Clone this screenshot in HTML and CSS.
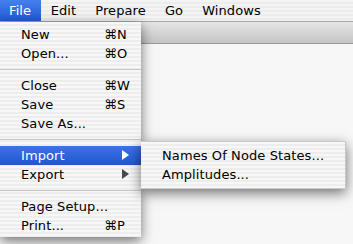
FILE: index.html
```html
<!DOCTYPE html>
<html>
<head>
<meta charset="utf-8">
<link rel="stylesheet" href="styles.css">
</head>
<body>
<div class="screen">
  <div class="menubar">
    <span class="mb-item active">File</span>
    <span class="mb-item">Edit</span>
    <span class="mb-item">Prepare</span>
    <span class="mb-item">Go</span>
    <span class="mb-item">Windows</span>
  </div>
  <div class="window">
    <div class="titlebar"></div>
    <div class="content"></div>
  </div>

  <div class="menu file-menu">
    <div class="row"><span class="label">New</span><span class="key">⌘N</span></div>
    <div class="row"><span class="label">Open...</span><span class="key">⌘O</span></div>
    <div class="sep"></div>
    <div class="row"><span class="label">Close</span><span class="key">⌘W</span></div>
    <div class="row"><span class="label">Save</span><span class="key">⌘S</span></div>
    <div class="row"><span class="label">Save As...</span><span class="key"></span></div>
    <div class="sep"></div>
    <div class="row hl"><span class="label">Import</span><span class="key"><span class="arrow"></span></span></div>
    <div class="row"><span class="label">Export</span><span class="key"><span class="arrow"></span></span></div>
    <div class="sep"></div>
    <div class="row"><span class="label wide">Page Setup...</span></div>
    <div class="row"><span class="label">Print...</span><span class="key">⌘P</span></div>
  </div>

  <div class="menu sub-menu">
    <div class="row"><span class="label">Names Of Node States...</span></div>
    <div class="row"><span class="label">Amplitudes...</span></div>
  </div>
</div>
</body>
</html>
```
FILE: styles.css
```css
* { box-sizing: border-box; }
html, body { margin: 0; padding: 0; }
body {
  width: 353px;
  height: 244px;
  overflow: hidden;
  font-family: "DejaVu Sans", "Liberation Sans", sans-serif;
  font-size: 13px;
  letter-spacing: 0.1px;
  color: #000;
  background: #f7f7f7;
}
.screen {
  position: relative;
  width: 353px;
  height: 244px;
  display: flex;
  flex-direction: column;
}
.menubar {
  height: 22px;
  display: flex;
  align-items: stretch;
  background: repeating-linear-gradient(#f4f4f4 0 2px, #ececec 2px 4px);
  border-bottom: 1px solid #a6a6a6;
}
.mb-item {
  display: flex;
  align-items: center;
  padding: 0 9.5px 1px;
  line-height: 1;
  white-space: nowrap;
}
.mb-item:first-child { padding-left: 9px; padding-right: 10px; }
.mb-item.active {
  color: #fff;
  background: linear-gradient(#4580ec, #1f5ad5);
}
.window {
  flex: 1;
  display: flex;
  flex-direction: column;
}
.titlebar {
  height: 22px;
  background: linear-gradient(#e6e6e6, #d2d2d2 60%, #c4c4c4);
  border-bottom: 1px solid #9a9a9a;
}
.content {
  flex: 1;
  background: #f7f7f7;
}
.menu {
  position: absolute;
  background: repeating-linear-gradient(#f7f7f7 0 2px, #ededed 2px 4px);
  box-shadow: 0 4px 12px rgba(0, 0, 0, 0.55);
}
.file-menu {
  left: 0;
  top: 22px;
  width: 141px;
  padding: 2.5px 0 2.5px;
}
.sub-menu {
  left: 141px;
  top: 141px;
  width: 205px;
  padding: 3.5px 0 4px;
  border: 1px solid rgba(0, 0, 0, 0.18);
  border-left: none;
}
.row {
  height: 19px;
  display: flex;
  align-items: center;
  white-space: nowrap;
}
.file-menu .label { width: 104px; flex: none; padding-left: 21px; }
.file-menu .label.wide { width: auto; }
.sub-menu .label { padding-left: 21px; }
.key { display: flex; align-items: center; }
.row.hl {
  color: #fff;
  background: linear-gradient(#3a74e4, #2256cf);
}
.sep {
  height: 13px;
  display: flex;
  align-items: center;
}
.sep::before {
  content: "";
  flex: 1;
  height: 1px;
  background: #c6c6c6;
}
.arrow {
  display: block;
  margin-left: 18px;
  width: 0;
  height: 0;
  border-top: 5px solid transparent;
  border-bottom: 5px solid transparent;
  border-left: 7px solid #4a4a4a;
}
.hl .arrow { border-left-color: #fff; }
```
